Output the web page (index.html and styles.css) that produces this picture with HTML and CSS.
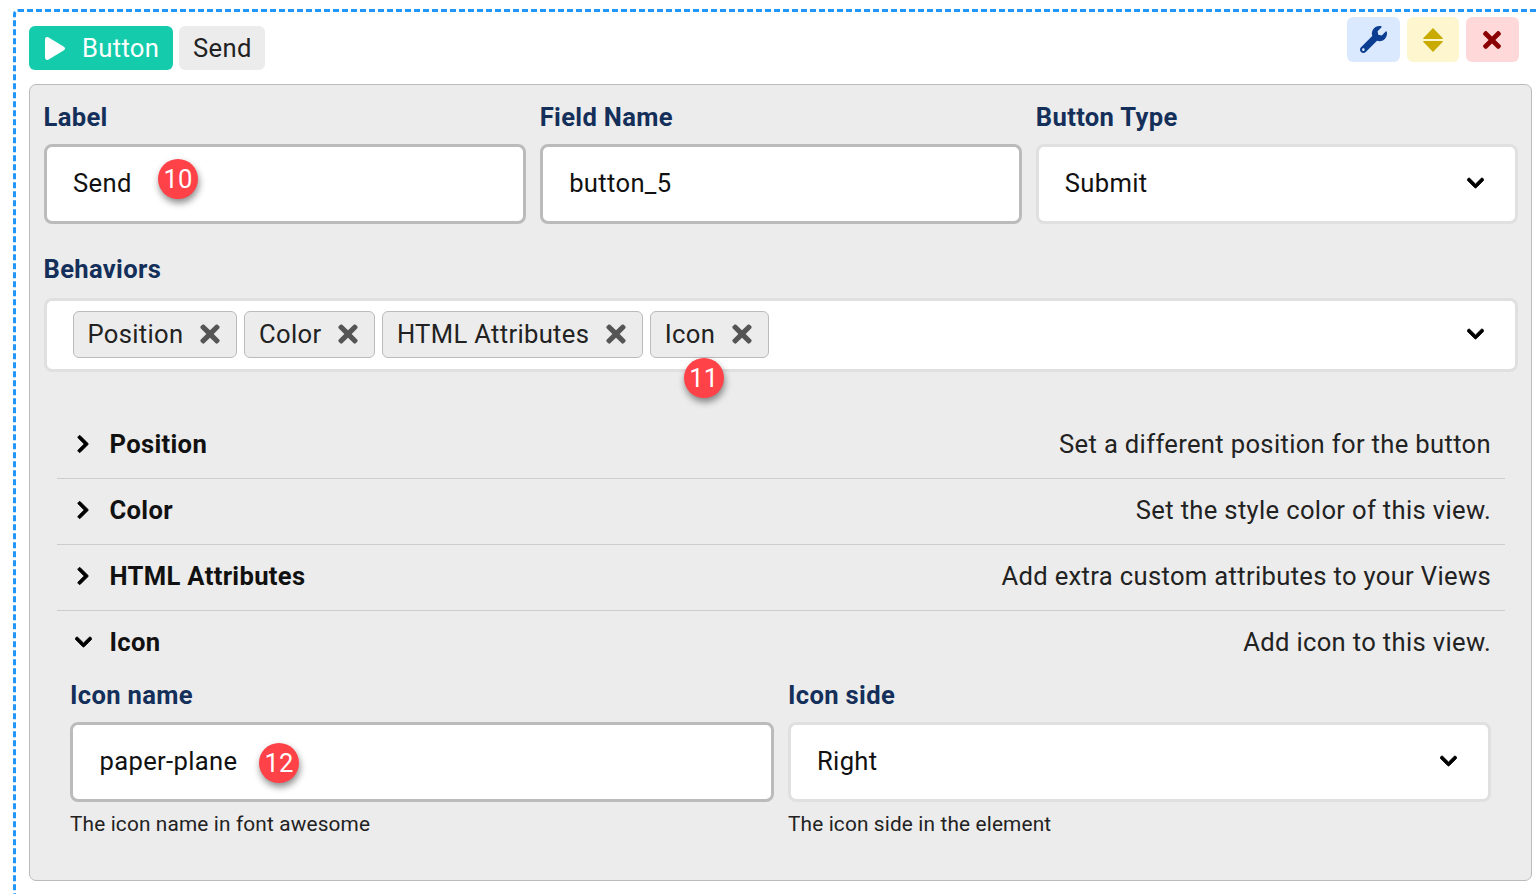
FILE: index.html
```html
<!DOCTYPE html>
<html lang="en">
<head>
<meta charset="utf-8">
<title>Button</title>
<link rel="stylesheet" href="styles.css">
</head>
<body>
<div class="view">
  <div class="tools">
    <button class="tool tool-blue"><svg class="ti-wrench" viewBox="0 0 512 512"><path d="M507.73 109.1c-2.24-9.03-13.54-12.09-20.12-5.51l-74.36 74.36-67.88-11.31-11.31-67.88 74.36-74.36c6.62-6.62 3.43-17.9-5.66-20.16-47.38-11.74-99.55.91-136.58 37.93-39.64 39.64-50.55 97.1-34.05 147.2L18.74 402.76c-24.99 24.99-24.99 65.51 0 90.5 24.99 24.99 65.51 24.99 90.5 0l213.21-213.21c50.12 16.71 107.47 5.68 147.37-34.22 37.07-37.07 49.7-89.32 37.91-136.73zM64 472c-13.25 0-24-10.75-24-24 0-13.26 10.75-24 24-24s24 10.74 24 24c0 13.25-10.75 24-24 24z"/></svg></button>
    <button class="tool tool-yellow"><svg class="ti-sort" viewBox="0 0 20 24"><path d="M10 0 19.6 9.9a.6.6 0 0 1-.4 1.1H.8a.6.6 0 0 1-.4-1.1Z M10 24 19.6 14.1a.6.6 0 0 0-.4-1.1H.8a.6.6 0 0 0-.4 1.1Z"/></svg></button>
    <button class="tool tool-red"><svg class="ti-x" viewBox="0 0 352 512"><path d="M242.72 256l100.07-100.07c12.28-12.28 12.28-32.19 0-44.48l-22.24-22.24c-12.28-12.28-32.19-12.28-44.48 0L176 189.28 75.93 89.21c-12.28-12.28-32.19-12.28-44.48 0L9.21 111.45c-12.28 12.28-12.28 32.19 0 44.48L109.28 256 9.21 356.07c-12.28 12.28-12.28 32.19 0 44.48l22.24 22.24c12.28 12.28 32.2 12.28 44.48 0L176 322.72l100.07 100.07c12.28 12.28 32.2 12.28 44.48 0l22.24-22.24c12.28-12.28 12.28-32.19 0-44.48L242.72 256z"/></svg></button>
  </div>

  <div class="head">
    <span class="type"><svg class="play" viewBox="0 0 448 512"><path d="M424.4 214.7L72.4 6.6C43.8-10.3 0 6.1 0 47.9V464c0 37.5 40.7 60.1 72.4 41.3l352-208c31.4-18.5 31.5-64.1 0-82.6z"/></svg>Button</span>
    <span class="name">Send</span>
  </div>

  <div class="panel">
    <div class="cols">
      <div class="field">
        <div class="label">Label</div>
        <div class="input">Send<span class="badge badge-10">10</span></div>
      </div>
      <div class="field">
        <div class="label">Field Name</div>
        <div class="input">button_5</div>
      </div>
      <div class="field">
        <div class="label">Button Type</div>
        <div class="input select">Submit<svg class="chev-d" viewBox="0 0 448 512"><path d="M207.029 381.476L12.686 187.132c-9.373-9.373-9.373-24.569 0-33.941l22.667-22.667c9.357-9.357 24.522-9.375 33.901-.04L224 284.505l154.745-154.021c9.379-9.335 24.544-9.317 33.901.04l22.667 22.667c9.373 9.373 9.373 24.569 0 33.941L240.971 381.476c-9.373 9.372-24.569 9.372-33.942 0z"/></svg></div>
      </div>
    </div>

    <div class="label label-behaviors">Behaviors</div>
    <div class="multi">
      <span class="tag">Position<svg class="tag-x" viewBox="0 0 352 512"><path d="M242.72 256l100.07-100.07c12.28-12.28 12.28-32.19 0-44.48l-22.24-22.24c-12.28-12.28-32.19-12.28-44.48 0L176 189.28 75.93 89.21c-12.28-12.28-32.19-12.28-44.48 0L9.21 111.45c-12.28 12.28-12.28 32.19 0 44.48L109.28 256 9.21 356.07c-12.28 12.28-12.28 32.19 0 44.48l22.24 22.24c12.28 12.28 32.2 12.28 44.48 0L176 322.72l100.07 100.07c12.28 12.28 32.2 12.28 44.48 0l22.24-22.24c12.28-12.28 12.28-32.19 0-44.48L242.72 256z"/></svg></span>
      <span class="tag">Color<svg class="tag-x" viewBox="0 0 352 512"><path d="M242.72 256l100.07-100.07c12.28-12.28 12.28-32.19 0-44.48l-22.24-22.24c-12.28-12.28-32.19-12.28-44.48 0L176 189.28 75.93 89.21c-12.28-12.28-32.19-12.28-44.48 0L9.21 111.45c-12.28 12.28-12.28 32.19 0 44.48L109.28 256 9.21 356.07c-12.28 12.28-12.28 32.19 0 44.48l22.24 22.24c12.28 12.28 32.2 12.28 44.48 0L176 322.72l100.07 100.07c12.28 12.28 32.2 12.28 44.48 0l22.24-22.24c12.28-12.28 12.28-32.19 0-44.48L242.72 256z"/></svg></span>
      <span class="tag">HTML Attributes<svg class="tag-x" viewBox="0 0 352 512"><path d="M242.72 256l100.07-100.07c12.28-12.28 12.28-32.19 0-44.48l-22.24-22.24c-12.28-12.28-32.19-12.28-44.48 0L176 189.28 75.93 89.21c-12.28-12.28-32.19-12.28-44.48 0L9.21 111.45c-12.28 12.28-12.28 32.19 0 44.48L109.28 256 9.21 356.07c-12.28 12.28-12.28 32.19 0 44.48l22.24 22.24c12.28 12.28 32.2 12.28 44.48 0L176 322.72l100.07 100.07c12.28 12.28 32.2 12.28 44.48 0l22.24-22.24c12.28-12.28 12.28-32.19 0-44.48L242.72 256z"/></svg></span>
      <span class="tag">Icon<svg class="tag-x" viewBox="0 0 352 512"><path d="M242.72 256l100.07-100.07c12.28-12.28 12.28-32.19 0-44.48l-22.24-22.24c-12.28-12.28-32.19-12.28-44.48 0L176 189.28 75.93 89.21c-12.28-12.28-32.19-12.28-44.48 0L9.21 111.45c-12.28 12.28-12.28 32.19 0 44.48L109.28 256 9.21 356.07c-12.28 12.28-12.28 32.19 0 44.48l22.24 22.24c12.28 12.28 32.2 12.28 44.48 0L176 322.72l100.07 100.07c12.28 12.28 32.2 12.28 44.48 0l22.24-22.24c12.28-12.28 12.28-32.19 0-44.48L242.72 256z"/></svg><span class="badge badge-11">11</span></span>
      <svg class="chev-d chev-multi" viewBox="0 0 448 512"><path d="M207.029 381.476L12.686 187.132c-9.373-9.373-9.373-24.569 0-33.941l22.667-22.667c9.357-9.357 24.522-9.375 33.901-.04L224 284.505l154.745-154.021c9.379-9.335 24.544-9.317 33.901.04l22.667 22.667c9.373 9.373 9.373 24.569 0 33.941L240.971 381.476c-9.373 9.372-24.569 9.372-33.942 0z"/></svg>
    </div>

    <div class="accordion">
      <div class="row">
        <span class="row-icon"><svg class="chev-r" viewBox="0 0 320 512"><path d="M285.476 272.971L91.132 467.314c-9.373 9.373-24.569 9.373-33.941 0l-22.667-22.667c-9.357-9.357-9.375-24.522-.04-33.901L188.505 256 34.484 101.255c-9.335-9.379-9.317-24.544.04-33.901l22.667-22.667c9.373-9.373 24.569-9.373 33.941 0L285.475 239.03c9.373 9.372 9.373 24.568.001 33.941z"/></svg></span>
        <span class="row-title">Position</span>
        <span class="row-desc">Set a different position for the button</span>
      </div>
      <div class="row">
        <span class="row-icon"><svg class="chev-r" viewBox="0 0 320 512"><path d="M285.476 272.971L91.132 467.314c-9.373 9.373-24.569 9.373-33.941 0l-22.667-22.667c-9.357-9.357-9.375-24.522-.04-33.901L188.505 256 34.484 101.255c-9.335-9.379-9.317-24.544.04-33.901l22.667-22.667c9.373-9.373 24.569-9.373 33.941 0L285.475 239.03c9.373 9.372 9.373 24.568.001 33.941z"/></svg></span>
        <span class="row-title">Color</span>
        <span class="row-desc">Set the style color of this view.</span>
      </div>
      <div class="row">
        <span class="row-icon"><svg class="chev-r" viewBox="0 0 320 512"><path d="M285.476 272.971L91.132 467.314c-9.373 9.373-24.569 9.373-33.941 0l-22.667-22.667c-9.357-9.357-9.375-24.522-.04-33.901L188.505 256 34.484 101.255c-9.335-9.379-9.317-24.544.04-33.901l22.667-22.667c9.373-9.373 24.569-9.373 33.941 0L285.475 239.03c9.373 9.372 9.373 24.568.001 33.941z"/></svg></span>
        <span class="row-title">HTML Attributes</span>
        <span class="row-desc">Add extra custom attributes to your Views</span>
      </div>
      <div class="row row-open">
        <span class="row-icon"><svg class="chev-d chev-row" viewBox="0 0 448 512"><path d="M207.029 381.476L12.686 187.132c-9.373-9.373-9.373-24.569 0-33.941l22.667-22.667c9.357-9.357 24.522-9.375 33.901-.04L224 284.505l154.745-154.021c9.379-9.335 24.544-9.317 33.901.04l22.667 22.667c9.373 9.373 9.373 24.569 0 33.941L240.971 381.476c-9.373 9.372-24.569 9.372-33.942 0z"/></svg></span>
        <span class="row-title">Icon</span>
        <span class="row-desc">Add icon to this view.</span>
      </div>
      <div class="row-body">
        <div class="field">
          <div class="label">Icon name</div>
          <div class="input">paper-plane<span class="badge badge-12">12</span></div>
          <div class="help">The icon name in font awesome</div>
        </div>
        <div class="field">
          <div class="label">Icon side</div>
          <div class="input select">Right<svg class="chev-d" viewBox="0 0 448 512"><path d="M207.029 381.476L12.686 187.132c-9.373-9.373-9.373-24.569 0-33.941l22.667-22.667c9.357-9.357 24.522-9.375 33.901-.04L224 284.505l154.745-154.021c9.379-9.335 24.544-9.317 33.901.04l22.667 22.667c9.373 9.373 9.373 24.569 0 33.941L240.971 381.476c-9.373 9.372-24.569 9.372-33.942 0z"/></svg></div>
          <div class="help">The icon side in the element</div>
        </div>
      </div>
    </div>
  </div>
</div>
</body>
</html>
```

FILE: styles.css
```css
* { box-sizing: border-box; }
html, body { margin: 0; height: 894px; overflow: hidden; background: #fff; }
body { font-family: Roboto, "Liberation Sans", sans-serif; font-size: 25.6px; letter-spacing: .33px; color: #111; }

.view {
  position: relative;
  width: 1540px;
  margin: 9px 0 0 13px;
  padding: 14px 14px 14px 13px;
  border: 3px dashed #2196fb;
  border-radius: 5px;
}

.tools { position: absolute; top: 5px; right: 31px; display: flex; gap: 7px; }
.tool {
  width: 53px; height: 45px; border: 0; border-radius: 6px; padding: 0;
  display: flex; align-items: center; justify-content: center;
}
.tool-blue { background: #dbe9fe; fill: #0b3d91; }
.tool-yellow { width: 52px; background: #fdf6cf; fill: #c9aa00; }
.tool-red { background: #ffd9d9; fill: #8b0000; }
.ti-wrench { width: 27px; height: 27px; }
.ti-sort { width: 20px; height: 24px; }
.ti-x { width: 18px; height: 26px; margin-right: 1px; }

.head { display: flex; gap: 6px; height: 44px; margin-bottom: 14px; }
.type, .name {
  display: flex; align-items: center; border-radius: 6px; height: 44px;
}
.type { background: #14ccac; color: #fff; padding: 0 14px 0 16px; width: 144px; }
.play { width: 20px; height: 23px; fill: #fff; margin-right: 17px; flex: none; }
.name { background: #ececec; padding: 0 13.5px 0 14px; color: #222; }

.panel {
  width: 1503px; height: 797px;
  background: #ececec;
  border: 1px solid #bbb;
  border-radius: 7px;
  padding: 14px 13px 14px 13.5px;
}

.cols { display: grid; grid-template-columns: repeat(3, 1fr); gap: 14px; }
.label { color: #14305a; font-weight: 700; line-height: 36px; margin-bottom: 9px; height: 36px; }
.label-behaviors { margin-top: 27px; margin-bottom: 10.5px; }

.input {
  position: relative;
  display: flex; align-items: center; justify-content: space-between;
  height: 80px; padding: 0 31px 2px 26.5px;
  background: #fff; color: #111;
  border: 3px solid #bbb; border-radius: 8px;
}
.select { border-color: #e0e0e0; padding-left: 26px; }
.chev-d { width: 17px; height: 20px; fill: #000; stroke: #000; stroke-width: 24; flex: none; }

.multi {
  position: relative;
  display: flex; align-items: center; gap: 7px;
  height: 74px; padding: 0 31px 1px 26.5px;
  background: #fff;
  border: 3px solid #e0e0e0; border-radius: 8px;
}
.chev-multi { margin-left: auto; }
.tag {
  position: relative;
  display: flex; align-items: center; height: 47px; padding: 0 16.5px 1px 13.5px;
  background: #ececec; color: #222;
  border: 1px solid #bbb; border-radius: 6px;
}
.tag-x { width: 20px; height: 28px; fill: #555; margin-left: 16.5px; }

.badge {
  position: absolute;
  width: 40px; height: 40px; border-radius: 50%;
  background: #ff4148; color: #fff; letter-spacing: 0;
  display: flex; align-items: center; justify-content: center;
  box-shadow: 1px 4px 7px rgba(0,0,0,.45);
}
.badge-10 { left: 111.5px; top: 12px; }
.badge-11 { left: 32.5px; top: 46.5px; z-index: 1; }
.badge-12 { left: 186px; top: 18px; }

.accordion { margin: 41.5px 13px 0 13.5px; }
.row { display: flex; align-items: center; height: 66px; padding: 0 14px 4px 18px; border-bottom: 1px solid #ccc; }
.row-open { border-bottom: 0; }
.row-icon { width: 34.5px; display: flex; flex: none; }
.chev-r { width: 16px; height: 20px; fill: #000; stroke: #000; stroke-width: 20; }
.chev-row { width: 17px; height: 20px; }
.row-title { font-weight: 700; color: #111; }
.row-desc { margin-left: auto; color: #222; }

.row-body { display: grid; grid-template-columns: 704px 703px; gap: 14px; padding: 0 0 0 13px; }
.row-body .label { margin-bottom: 9px; height: 36px; margin-top: 0; }
.help { font-size: 20.8px; letter-spacing: .15px; color: #222; margin-top: 10px; }
```
